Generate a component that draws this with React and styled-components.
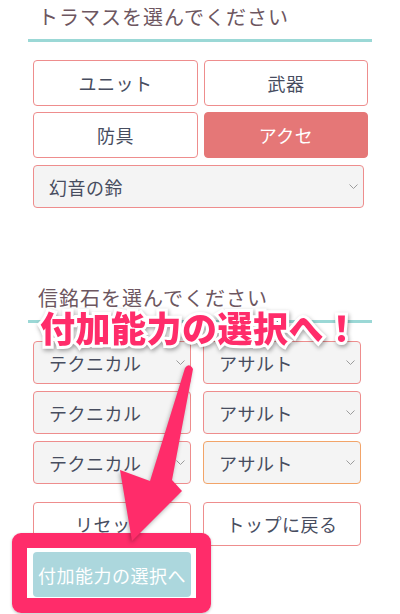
import React from 'react';
import styled, { createGlobalStyle, css } from 'styled-components';

const colors = {
  heading: '#6d5660',
  teal: '#9bd8d6',
  coral: '#ee8d8d',
  coralFill: '#e57777',
  orange: '#f2a469',
  text: '#474d5f',
  field: '#f4f4f4',
  submit: '#acd7dd',
  pink: '#ff2c6a',
};

const GlobalStyle = createGlobalStyle`
  html, body {
    margin: 0;
    padding: 0;
    background: #fff;
    overflow: hidden;
  }
  body {
    font-family: 'Noto Sans CJK JP', 'Noto Sans', sans-serif;
  }
`;

const Page = styled.div`
  position: relative;
  width: 400px;
  height: 614px;
  box-sizing: border-box;
  padding: 0 28px;
`;

const Section = styled.section`
  & + & {
    margin-top: 73px;
  }
`;

const Heading = styled.h2`
  margin: 0;
  padding: 3px 10px 8px;
  font-size: 20px;
  font-weight: normal;
  line-height: 28px;
  letter-spacing: 1px;
  color: ${colors.heading};
  border-bottom: 3px solid ${colors.teal};
`;

const Body = styled.div`
  display: flex;
  flex-direction: column;
  align-items: flex-start;
  padding: 18px 0 0 5px;
`;

const TypeGrid = styled.div`
  display: grid;
  grid-template-columns: 165px 164px;
  grid-auto-rows: 46px;
  gap: 6px;
`;

const buttonBase = css`
  box-sizing: border-box;
  border: 1px solid ${colors.coral};
  border-radius: 4px;
  background: #fff;
  color: ${colors.text};
  font-family: inherit;
  font-size: 18px;
  letter-spacing: 0.5px;
  padding: 0;
  display: flex;
  align-items: center;
  justify-content: center;
`;

const TypeButton = styled.div`
  ${buttonBase}

  ${props => props.active && css`
    background: ${colors.coralFill};
    border-color: ${colors.coralFill};
    color: #fff;
  `}
`;

const SelectBox = styled.div`
  box-sizing: border-box;
  width: ${props => props.width || 158}px;
  height: 43px;
  display: flex;
  align-items: center;
  justify-content: space-between;
  padding: 0 5px 0 15px;
  border: 1px solid ${props => (props.focused ? colors.orange : colors.coral)};
  border-radius: 4px;
  background: ${colors.field};
  color: ${colors.text};
  font-size: 18px;
  letter-spacing: 0.5px;
`;

const TopSelect = styled(SelectBox)`
  margin-top: 7px;
`;

const StoneGrid = styled.div`
  display: grid;
  grid-template-columns: 158px 158px;
  gap: 7px 12px;
`;

const ActionGrid = styled.div`
  display: grid;
  grid-template-columns: 158px 158px;
  gap: 6px 12px;
  margin-top: 18px;
`;

const ActionButton = styled.div`
  ${buttonBase}
  height: 44px;
`;

const SubmitButton = styled.div`
  ${buttonBase}
  height: 45px;
  border: none;
  background: ${colors.submit};
  color: #fff;
`;

const Frame = styled.div`
  position: absolute;
  left: 12px;
  top: 533px;
  width: 199px;
  height: 80px;
  box-sizing: border-box;
  border: 15px solid ${colors.pink};
  border-radius: 9px;
  box-shadow: 0 1px 3px rgba(0, 0, 0, 0.25);
`;

const Arrow = styled.svg`
  position: absolute;
  left: 0;
  top: 0;
  overflow: visible;
  filter: drop-shadow(-1px 2px 2px rgba(0, 0, 0, 0.3));
`;

const Callout = styled.div`
  position: absolute;
  left: 40px;
  top: 309px;
  font-size: 35px;
  line-height: 35px;
  font-weight: 900;
  letter-spacing: 0.5px;
  white-space: nowrap;
  color: ${colors.pink};
  -webkit-text-stroke: 6px #fff;
  paint-order: stroke fill;
  filter: drop-shadow(1px 2px 2px rgba(0, 0, 0, 0.35));
`;

const Chevron = () => (
  <svg width="9" height="5" viewBox="0 0 9 5">
    <polyline points="0.5,0.5 4.5,4.5 8.5,0.5" fill="none" stroke="#9c9c9c" strokeWidth="1" />
  </svg>
);

const Select = ({ children, ...rest }) => (
  <SelectBox {...rest}>
    <span>{children}</span>
    <Chevron />
  </SelectBox>
);

const stones = [
  ['テクニカル', 'アサルト'],
  ['テクニカル', 'アサルト'],
  ['テクニカル', 'アサルト'],
];

const types = ['ユニット', '武器', '防具', 'アクセ'];

export default function App() {
  return (
    <Page>
      <GlobalStyle />
      <Section>
        <Heading>トラマスを選んでください</Heading>
        <Body>
          <TypeGrid>
            {types.map(t => (
              <TypeButton key={t} active={t === 'アクセ'}>{t}</TypeButton>
            ))}
          </TypeGrid>
          <TopSelect width={331}>
            <span>幻音の鈴</span>
            <Chevron />
          </TopSelect>
        </Body>
      </Section>

      <Section>
        <Heading>信銘石を選んでください</Heading>
        <Body>
          <StoneGrid>
            {stones.map((row, i) => row.map((s, j) => (
              <Select key={`${i}-${j}`} focused={i === 2 && j === 1}>{s}</Select>
            )))}
          </StoneGrid>
          <ActionGrid>
            <ActionButton>リセット</ActionButton>
            <ActionButton>トップに戻る</ActionButton>
            <SubmitButton>付加能力の選択へ</SubmitButton>
          </ActionGrid>
        </Body>
      </Section>

      <Frame />
      <Arrow width="400" height="614" viewBox="0 0 400 614">
        <path
          d="M185 368 Q189 362 193 369 L172 480 L182 491 L132 541 L120 470 L150 481 Z"
          fill={colors.pink}
        />
      </Arrow>
      <Callout>付加能力の選択へ！</Callout>
    </Page>
  );
}
